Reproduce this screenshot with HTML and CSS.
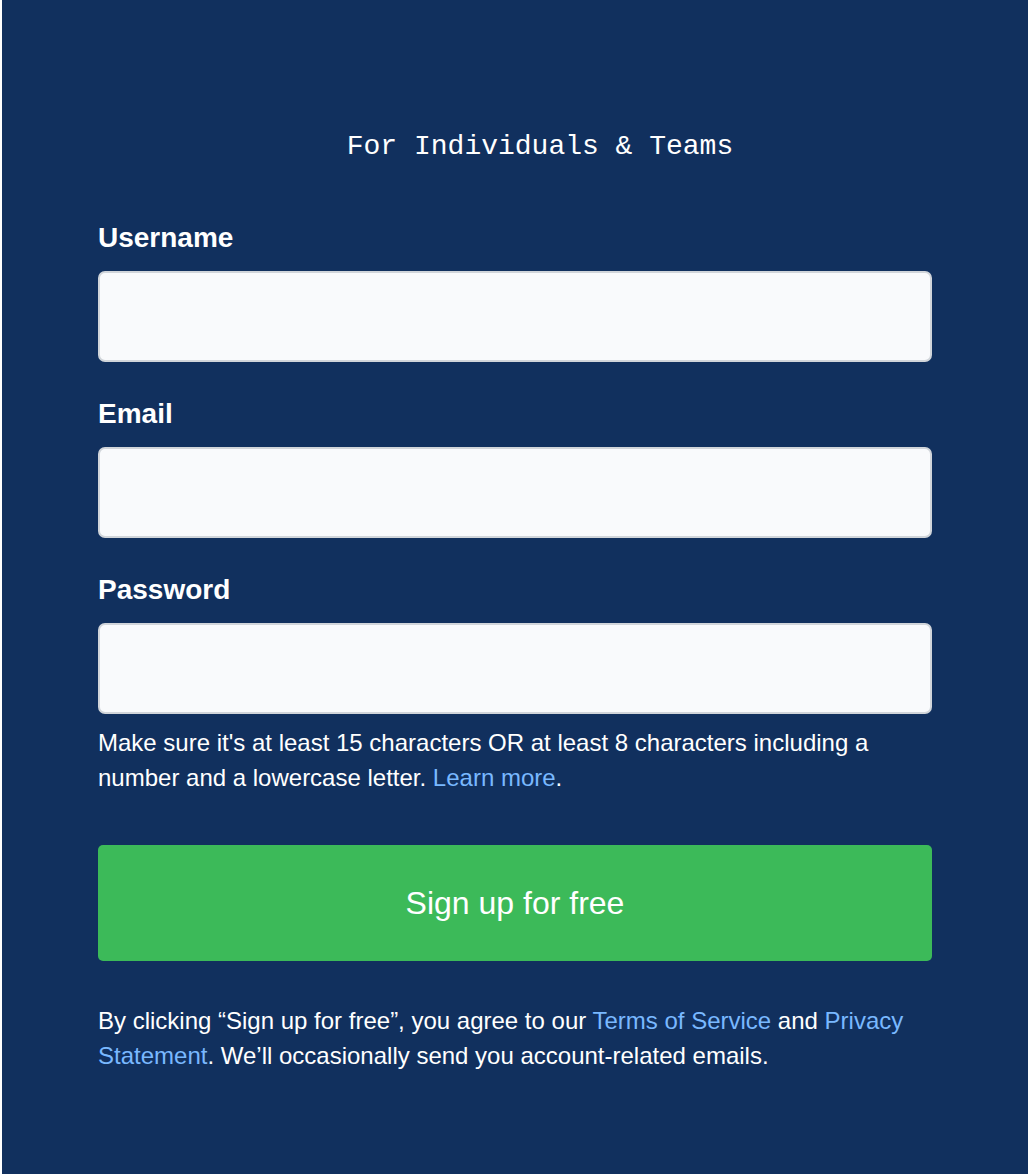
FILE: index.html
```html
<!DOCTYPE html>
<html lang="en">
<head>
<meta charset="utf-8">
<title>Sign up</title>
<link rel="stylesheet" href="styles.css">
</head>
<body>
<main class="page">
  <h1 class="title">For Individuals &amp; Teams</h1>
  <form class="form">
    <label class="label" for="username">Username</label>
    <input class="input" id="username" type="text">
    <label class="label" for="email">Email</label>
    <input class="input" id="email" type="email">
    <label class="label" for="password">Password</label>
    <input class="input input-last" id="password" type="password">
    <p class="note">Make sure it's at least 15 characters OR at least 8 characters including a number and a lowercase letter. <a class="link" href="#">Learn more</a>.</p>
    <button class="btn" type="button">Sign up for free</button>
    <p class="legal">By clicking “Sign up for free”, you agree to our <a class="link" href="#">Terms of Service</a> and <a class="link" href="#">Privacy Statement</a>. We’ll occasionally send you account-related emails.</p>
  </form>
</main>
</body>
</html>
```
FILE: styles.css
```css
html, body {
  margin: 0;
  padding: 0;
  background: #ffffff;
}
.page {
  box-sizing: border-box;
  margin-left: 2px;
  min-height: 1174px;
  background: #11305e;
  padding: 126px 96px 0 96px;
  font-family: "Liberation Sans", Arial, sans-serif;
  color: #ffffff;
}
.title {
  margin: 0 0 49px 0;
  padding-left: 50px;
  text-align: center;
  font-family: "Liberation Mono", "Courier New", monospace;
  font-weight: normal;
  font-size: 28px;
  line-height: 42px;
}
.form {
  display: flex;
  flex-direction: column;
}
.label {
  font-size: 28px;
  line-height: 42px;
  font-weight: bold;
  margin-bottom: 12px;
}
.input {
  box-sizing: border-box;
  height: 91px;
  margin: 0 0 31px 0;
  border: 2px solid #d1d5da;
  border-radius: 7px;
  background: #f9fafc;
  font-size: 22px;
  padding: 0 16px;
}
.input-last {
  margin-bottom: 11px;
}
.note {
  margin: 0 0 50px 0;
  font-size: 24px;
  line-height: 35px;
}
.link {
  color: #79b8ff;
  text-decoration: none;
}
.btn {
  height: 116px;
  border: none;
  border-radius: 5px;
  background: #3cba59;
  color: #ffffff;
  font-family: "Liberation Sans", Arial, sans-serif;
  font-size: 32px;
  cursor: pointer;
}
.legal {
  margin: 42px 0 0 0;
  font-size: 24px;
  line-height: 35px;
}
```
